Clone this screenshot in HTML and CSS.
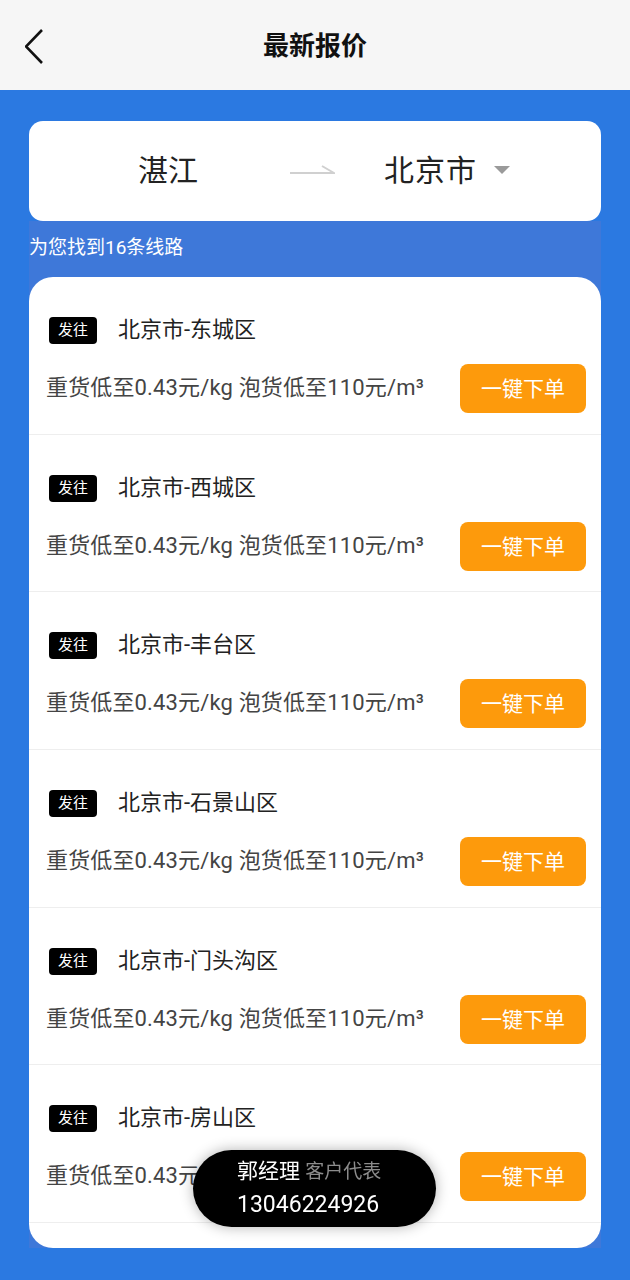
FILE: index.html
```html
<!DOCTYPE html>
<html lang="zh">
<head>
    <meta charset="UTF-8">
    <meta name="viewport" content="width=device-width, initial-scale=1.0">
    <link rel="stylesheet" href="styles.css">
</head>
<body>
    <div class="header">
        <svg class="back" width="20" height="36" viewBox="0 0 20 36">
            <polyline points="17,2 1,18.5 17,35" fill="none" stroke="#111" stroke-width="2.6" stroke-linejoin="miter"/>
        </svg>
        <h1>最新报价</h1>
    </div>

    <div class="main">
        <div class="route-card">
            <div class="city-from">湛江</div>
            <svg class="route-arrow" width="45" height="14" viewBox="0 0 45 14">
                <polyline points="0,11 44,11 32,4" fill="none" stroke="#d0d0d0" stroke-width="2"/>
            </svg>
            <div class="city-to">北京市</div>
            <span class="caret"></span>
        </div>

        <div class="result">
            <p class="result-count">为您找到16条线路</p>
            <div class="list">
                <div class="line">
                    <div class="line-top"><span class="tag">发往</span><span class="line-name">北京市-东城区</span></div>
                    <div class="line-bottom"><span class="price">重货低至0.43元/kg 泡货低至110元/m³</span><button class="order">一键下单</button></div>
                </div>
                <div class="line">
                    <div class="line-top"><span class="tag">发往</span><span class="line-name">北京市-西城区</span></div>
                    <div class="line-bottom"><span class="price">重货低至0.43元/kg 泡货低至110元/m³</span><button class="order">一键下单</button></div>
                </div>
                <div class="line">
                    <div class="line-top"><span class="tag">发往</span><span class="line-name">北京市-丰台区</span></div>
                    <div class="line-bottom"><span class="price">重货低至0.43元/kg 泡货低至110元/m³</span><button class="order">一键下单</button></div>
                </div>
                <div class="line">
                    <div class="line-top"><span class="tag">发往</span><span class="line-name">北京市-石景山区</span></div>
                    <div class="line-bottom"><span class="price">重货低至0.43元/kg 泡货低至110元/m³</span><button class="order">一键下单</button></div>
                </div>
                <div class="line">
                    <div class="line-top"><span class="tag">发往</span><span class="line-name">北京市-门头沟区</span></div>
                    <div class="line-bottom"><span class="price">重货低至0.43元/kg 泡货低至110元/m³</span><button class="order">一键下单</button></div>
                </div>
                <div class="line">
                    <div class="line-top"><span class="tag">发往</span><span class="line-name">北京市-房山区</span></div>
                    <div class="line-bottom"><span class="price">重货低至0.43元/kg 泡货低至110元/m³</span><button class="order">一键下单</button></div>
                </div>
            </div>
        </div>
    </div>

    <div class="contact">
        <div class="contact-name">郭经理 <span class="contact-role">客户代表</span></div>
        <div class="contact-phone">13046224926</div>
    </div>
</body>
</html>
```

FILE: styles.css
```css
body {
    margin: 0;
    background: #2b79e1;
    font-family: Roboto, "Noto Sans CJK SC", sans-serif;
    min-height: 1280px;
}
.header {
    position: relative;
    height: 90px;
    background: #f6f6f6;
    display: flex;
    align-items: center;
    justify-content: center;
}
.header h1 {
    margin: 0;
    font-size: 26px;
    font-weight: bold;
    color: #111;
    line-height: 1;
    padding-top: 2px;
}
.back {
    position: absolute;
    left: 25px;
    top: 28px;
}
.main {
    padding: 31px 29px 32px;
}
.route-card {
    height: 100px;
    box-sizing: border-box;
    padding-bottom: 6px;
    background: #fff;
    border-radius: 14px;
    display: flex;
    align-items: center;
}
.city-from {
    width: 244px;
    padding-left: 17px;
    text-align: center;
    font-size: 30px;
    color: #222;
}
.route-arrow {
    margin-top: 2px;
}
.city-to {
    margin-left: 49px;
    font-size: 30px;
    color: #222;
    letter-spacing: 1px;
}
.caret {
    margin-left: 17px;
    width: 0;
    height: 0;
    border-left: 8px solid transparent;
    border-right: 8px solid transparent;
    border-top: 8px solid #9a9a9a;
    margin-top: 3px;
}
.result {
    background: #3e78d9;
}
.result-count {
    margin: 0;
    height: 56px;
    line-height: 54px;
    font-size: 19px;
    color: #fff;
}
.list {
    background: #fff;
    border-radius: 24px;
    padding-bottom: 25px;
}
.line {
    height: 157.7px;
    box-sizing: border-box;
    padding-top: 40px;
    border-bottom: 1px solid #eeeeee;
}
.line-top {
    display: flex;
    align-items: center;
    height: 27px;
    padding-left: 20px;
}
.tag {
    width: 48px;
    height: 27px;
    line-height: 27px;
    text-align: center;
    background: #000;
    color: #fff;
    font-size: 15px;
    border-radius: 4px;
}
.line-name {
    margin-left: 21px;
    font-size: 22px;
    line-height: 1;
    padding-bottom: 1px;
    color: #222;
}
.line-bottom {
    display: flex;
    align-items: center;
    justify-content: space-between;
    margin-top: 20px;
    padding: 0 15px 0 17px;
}
.price {
    font-size: 22px;
    line-height: 1;
    padding-bottom: 1px;
    color: #444;
    letter-spacing: 0.15px;
}
.order {
    width: 126px;
    height: 49px;
    padding: 0 0 3px;
    border: none;
    border-radius: 8px;
    background: #fd9a0c;
    color: #fff;
    font-family: Roboto, "Noto Sans CJK SC", sans-serif;
    font-size: 21px;
    cursor: pointer;
}
.contact {
    position: fixed;
    left: 193px;
    top: 1150px;
    width: 243px;
    height: 77px;
    box-sizing: border-box;
    padding: 6px 0 0 44px;
    background: #000;
    border-radius: 39px;
    box-shadow: 0 0 14px rgba(0, 0, 0, 0.3);
    color: #fff;
}
.contact-name {
    font-size: 21px;
    line-height: 30px;
}
.contact-role {
    font-size: 19px;
    color: #8c8c8c;
}
.contact-phone {
    font-size: 23px;
    line-height: 35px;
}
```
